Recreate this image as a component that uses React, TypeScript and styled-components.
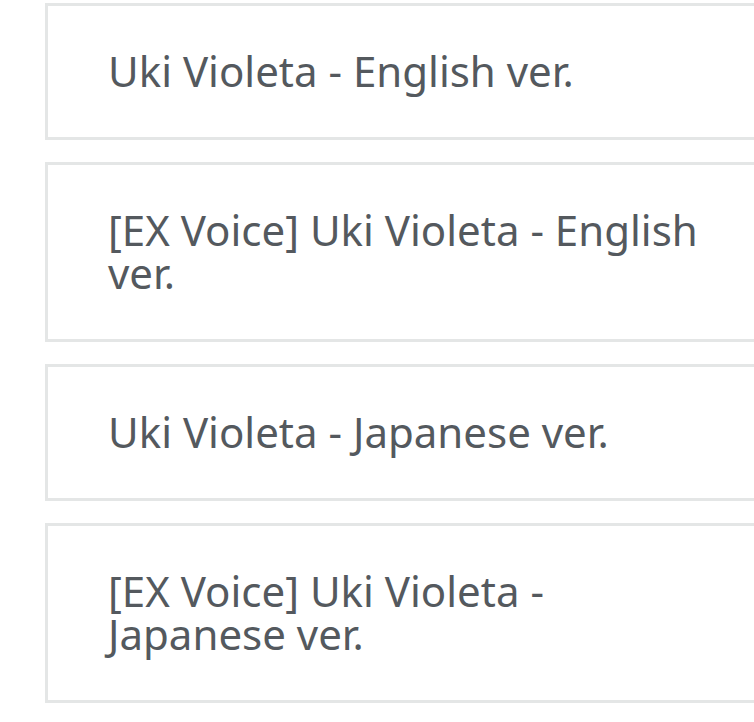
import React from "react";
import styled, { createGlobalStyle } from "styled-components";

const Global = createGlobalStyle`
  html, body {
    margin: 0;
    padding: 0;
    background: #ffffff;
    overflow: hidden;
  }
  body {
    font-family: "Noto Sans", "Open Sans", sans-serif;
  }
`;

const List = styled.div`
  display: flex;
  flex-direction: column;
  gap: 22px;
  padding: 3px 0 0 45px;
  width: 740px;
`;

const Card = styled.div`
  border: 3px solid #e4e6e6;
  background: #ffffff;
  padding: 43px 60px 45px 60px;
  box-sizing: border-box;
  width: 740px;
`;

const Title = styled.div`
  font-family: "Noto Sans", "Open Sans", sans-serif;
  font-size: 42px;
  line-height: 43px;
  color: #54595e;
  font-weight: 400;
`;

const items = [
  "Uki Violeta - English ver.",
  "[EX Voice] Uki Violeta - English ver.",
  "Uki Violeta - Japanese ver.",
  "[EX Voice] Uki Violeta - Japanese ver.",
];

export default function App() {
  return (
    <>
      <Global />
      <List>
        {items.map((t) => (
          <Card key={t}>
            <Title>{t}</Title>
          </Card>
        ))}
      </List>
    </>
  );
}
